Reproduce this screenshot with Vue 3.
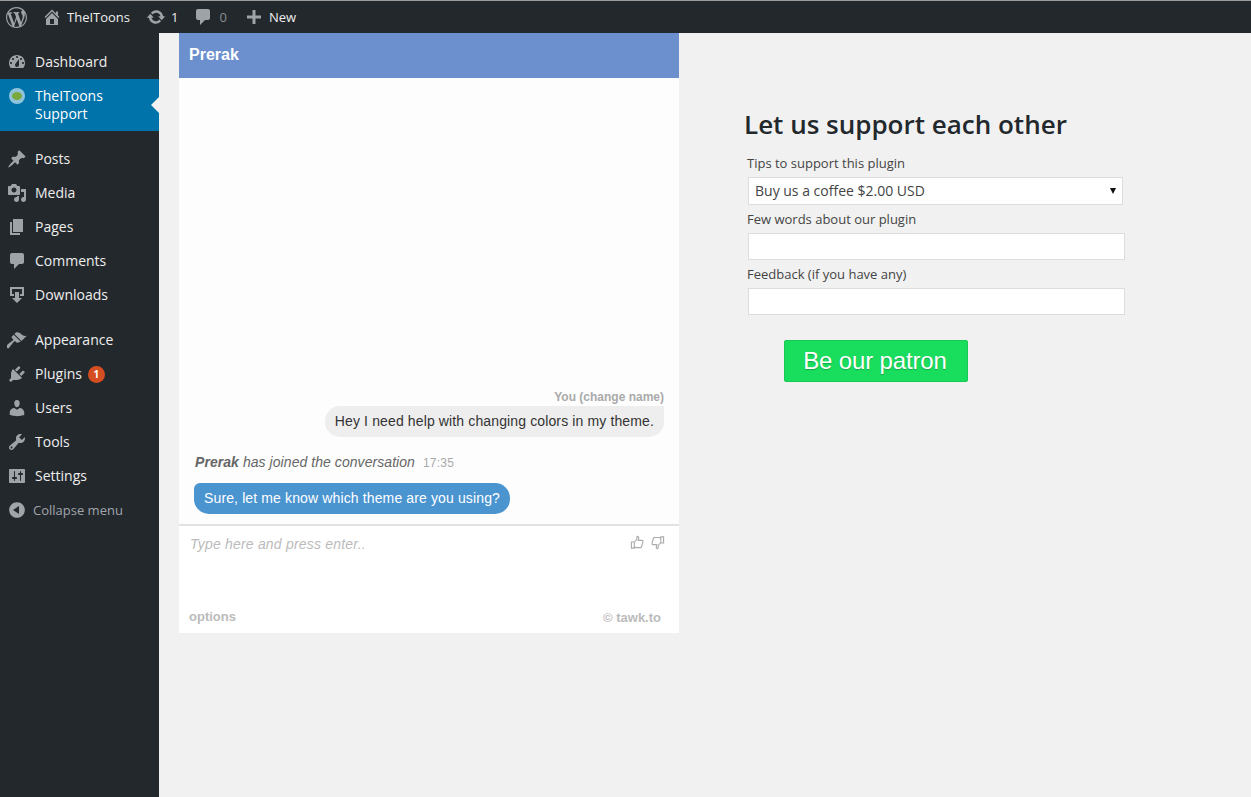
<template>
  <div class="page">
    <header class="topbar">
      <a class="bar-logo">
        <svg viewBox="0 0 20 20" class="wp"><path :d="icons.wordpress" /></svg>
      </a>
      <a class="bar-item site">
        <svg viewBox="0 0 20 20"><path :d="icons.home" /></svg>
        <span>TheIToons</span>
      </a>
      <a class="bar-item updates">
        <svg viewBox="0 0 20 20"><path :d="icons.update" /></svg>
        <span>1</span>
      </a>
      <a class="bar-item comments">
        <svg viewBox="0 0 20 20"><path :d="icons.comments" /></svg>
        <span>0</span>
      </a>
      <a class="bar-item add">
        <svg viewBox="0 0 20 20"><path :d="icons.plus" /></svg>
        <span>New</span>
      </a>
    </header>

    <div class="main">
      <nav class="sidebar">
        <ul v-for="(group, g) in menu" :key="g" class="menu-group">
          <li v-for="item in group" :key="item.label" :class="['menu-item', { active: item.active }]">
            <span v-if="item.active" class="plugin-icon"><i></i></span>
            <svg v-else viewBox="0 0 20 20"><path :d="icons[item.icon]" /></svg>
            <span class="menu-label">{{ item.label }}</span>
            <span v-if="item.badge" class="badge">{{ item.badge }}</span>
          </li>
        </ul>
        <div class="collapse">
          <svg viewBox="0 0 20 20"><path :d="icons.collapse" /></svg>
          <span>Collapse menu</span>
        </div>
      </nav>

      <section class="content">
        <div class="chat">
          <div class="chat-head">Prerak</div>
          <div class="chat-body">
            <div class="you">You (change name)</div>
            <div class="bubble mine">Hey I need help with changing colors in my theme.</div>
            <div class="joined">
              <em><b>Prerak</b> has joined the conversation</em>
              <span class="time">17:35</span>
            </div>
            <div class="bubble theirs">Sure, let me know which theme are you using?</div>
          </div>
          <div class="chat-foot">
            <div class="compose">
              <textarea class="chat-input" placeholder="Type here and press enter.."></textarea>
              <div class="rate">
                <svg viewBox="0 0 16 16"><path d="M1.500 7.500h3v6.500h-3zM4.500 8l2.600-3.200.5-3.300c1.400-.2 2 .9 1.600 2.600l-.4 1.600h3.900c1 0 1.400.8 1.100 1.600l-1.500 5.200c-.2.6-.6.9-1.200.9H6.500l-2-.9" /></svg>
                <svg viewBox="0 0 16 16"><path d="M14.500 8.500h-3V2h3zM11.500 8l-2.600 3.200-.5 3.300c-1.400.2-2-.9-1.600-2.600l.4-1.600H3.300c-1 0-1.400-.8-1.100-1.600l1.500-5.200C3.900 2.900 4.300 2.600 4.900 2.600h4.600l2 .9" /></svg>
              </div>
            </div>
            <div class="foot-links">
              <span>options</span>
              <span class="brand">© tawk.to</span>
            </div>
          </div>
        </div>

        <form class="support" @submit.prevent>
          <h2>Let us support each other</h2>
          <label>Tips to support this plugin</label>
          <div class="select-wrap">
            <select>
              <option>Buy us a coffee $2.00 USD</option>
            </select>
          </div>
          <label>Few words about our plugin</label>
          <input type="text" />
          <label>Feedback (if you have any)</label>
          <input type="text" />
          <button type="submit">Be our patron</button>
        </form>
      </section>
    </div>
  </div>
</template>

<script setup>
const icons = {
  wordpress:
    'M20 10c0-5.51-4.49-10-10-10C4.48 0 0 4.49 0 10c0 5.52 4.48 10 10 10 5.51 0 10-4.48 10-10zM7.780 15.370L4.370 6.220c.55-.02 1.170-.08 1.170-.08.5-.06.44-1.130-.06-1.110 0 0-1.450.11-2.370.11-.18 0-.37 0-.58-.01C4.120 2.690 6.870 1.110 10 1.110c2.330 0 4.450.87 6.050 2.340-.68-.11-1.650.39-1.650 1.580 0 .74.45 1.360.9 2.100.35.61.55 1.360.55 2.460 0 1.490-1.400 5-1.400 5l-3.030-8.370c.54-.02.82-.17.82-.17.5-.05.44-1.250-.06-1.220 0 0-1.440.12-2.380.12-.87 0-2.330-.12-2.330-.12-.5-.03-.56 1.200-.06 1.220l.92.08 1.260 3.410zM17.410 10c.24-.64.74-1.870.43-4.250.7 1.290 1.050 2.710 1.050 4.250 0 3.290-1.730 6.240-4.400 7.780.97-2.590 1.940-5.200 2.920-7.780zM6.100 18.090C3.120 16.650 1.110 13.530 1.110 10c0-1.300.23-2.480.72-3.590C3.250 10.300 4.670 14.200 6.100 18.090zm4.030-6.630l2.580 6.980c-.86.29-1.760.45-2.710.45-.79 0-1.570-.11-2.290-.33.81-2.380 1.620-4.740 2.420-7.100z',
  home: 'M16 8.500l1.530 1.530-1.060 1.060L10 4.620l-6.470 6.470-1.060-1.060L10 2.500l4 4v-2h2v4zm-6-2.460l6 5.990V18H4v-5.970zM12 17v-5H8v5h4z',
  update:
    'M10.200 3.280c3.530 0 6.430 2.610 6.920 6h2.080l-3.500 4-3.500-4h2.320c-.45-1.970-2.210-3.450-4.320-3.450-1.450 0-2.730.71-3.540 1.780L4.950 5.660C6.230 4.200 8.110 3.280 10.200 3.280zm-.4 13.440c-3.520 0-6.430-2.610-6.920-6H.8l3.500-4c1.170 1.330 2.330 2.670 3.500 4H5.480c.45 1.970 2.210 3.450 4.320 3.450 1.450 0 2.730-.71 3.540-1.780l1.710 1.950c-1.280 1.460-3.150 2.380-5.250 2.380z',
  comments:
    'M5 2h10c1.100 0 2 .9 2 2v7c0 1.100-.9 2-2 2h-3l-5 5v-5H5c-1.100 0-2-.9-2-2V4c0-1.100.9-2 2-2z',
  plus: 'M17 8.500v3h-5.500V17h-3v-5.500H3v-3h5.500V3h3v5.500z',
  dashboard:
    'M3.760 16h12.480c1.100-1.370 1.760-3.110 1.760-5 0-4.420-3.580-8-8-8s-8 3.580-8 8c0 1.890.66 3.630 1.760 5zM10 4c.55 0 1 .45 1 1s-.45 1-1 1-1-.45-1-1 .45-1 1-1zM6 6c.55 0 1 .45 1 1s-.45 1-1 1-1-.45-1-1 .45-1 1-1zm8 0c.55 0 1 .45 1 1s-.45 1-1 1-1-.45-1-1 .45-1 1-1zm-5.370 5.550L12 7v6c0 1.100-.9 2-2 2s-2-.9-2-2c0-.57.24-1.080.63-1.450zM4 10c.55 0 1 .45 1 1s-.45 1-1 1-1-.45-1-1 .45-1 1-1zm12 0c.55 0 1 .45 1 1s-.45 1-1 1-1-.45-1-1 .45-1 1-1z',
  post: 'M10.440 3.020l1.820-1.820 6.360 6.350-1.830 1.820c-1.050-.68-2.480-.57-3.410.36l-.75.75c-.92.93-1.040 2.350-.35 3.410l-1.830 1.820-2.410-2.410-2.800 2.790c-.42.42-3.380 2.710-3.800 2.290s1.860-3.390 2.280-3.810l2.790-2.790L4.100 9.360l1.830-1.820c1.050.69 2.480.57 3.400-.36l.75-.75c.93-.92 1.050-2.350.36-3.410z',
  media:
    'M13 11V4c0-.55-.45-1-1-1h-1.670L9 1H5L3.670 3H2c-.55 0-1 .45-1 1v7c0 .55.45 1 1 1h10c.55 0 1-.45 1-1zM7 4.500c1.380 0 2.500 1.120 2.500 2.500S8.380 9.500 7 9.500 4.500 8.380 4.500 7 5.620 4.500 7 4.500zM14 6h5v10.500c0 1.380-1.120 2.500-2.500 2.500S14 17.880 14 16.500s1.120-2.500 2.500-2.500c.17 0 .34.02.5.05V9h-3V6zm-4 8.050V13h2v3.500c0 1.380-1.120 2.500-2.500 2.500S7 17.880 7 16.500 8.120 14 9.500 14c.17 0 .34.02.5.05z',
  page: 'M6 15V2h10v13H6zm-1 1h8v2H3V5h2v11z',
  download: 'M3 2h14v9h-4V9h2V4H5v5h2v2H3zM8 7h4v6h3l-5 5-5-5h3z',
  appearance:
    'M14.480 11.060L7.410 3.990l1.500-1.500c.5-.56 2.300-.47 3.510.32 1.210.8 1.430 1.280 2.910 2.100 1.180.64 2.450 1.260 4.450.85zm-.71.71L6.700 4.700 4.930 6.470c-.39.39-.39 1.020 0 1.410l1.060 1.060c.39.39.39 1.030 0 1.420-.6.6-6.480 5.060-6.480 5.060-.81.65-.3 1.700.26 2.260.56.56 1.610 1.070 2.260.26 0 0 4.460-5.880 5.060-6.480.39-.39 1.030-.39 1.420 0l1.060 1.060c.39.39 1.020.39 1.410 0z',
  plugin:
    'M13.110 4.360L9.870 7.600 8 5.730l3.240-3.240c.35-.34 1.050-.2 1.560.32.52.51.66 1.210.31 1.550zm-8 1.770l.91-1.120 9.010 9.010-1.190.84c-.71.71-2.630 1.160-3.820 1.160H6.140L4.900 17.260c-.59.59-1.540.59-2.120 0-.59-.58-.59-1.530 0-2.120l1.240-1.240v-3.880c0-1.130.4-3.190 1.090-3.890zm7.260 3.970l3.240-3.240c.34-.35 1.040-.21 1.550.31.52.51.66 1.210.31 1.550l-3.240 3.250z',
  users:
    'M10 9.250c-2.270 0-2.730-3.440-2.730-3.440C7 4.020 7.820 2 9.970 2c2.160 0 2.980 2.020 2.710 3.810 0 0-.41 3.440-2.680 3.440zm0 2.570L12.720 10c2.390 0 4.520 2.330 4.520 4.530v2.490s-3.650 1.130-7.240 1.130c-3.650 0-7.240-1.130-7.240-1.130v-2.490c0-2.250 1.940-4.480 4.470-4.480z',
  tools:
    'M16.680 9.770c-1.340 1.340-3.300 1.670-4.950.99l-5.410 6.520c-.99.99-2.590.99-3.580 0s-.99-2.590 0-3.570l6.520-5.420c-.68-1.650-.35-3.610.99-4.950 1.280-1.280 3.120-1.620 4.720-1.060l-2.890 2.890 2.820 2.820 2.860-2.870c.53 1.580.18 3.390-1.080 4.650zM3.810 16.210c.4.39 1.040.39 1.430 0 .4-.4.4-1.040 0-1.430-.39-.4-1.030-.4-1.430 0-.39.39-.39 1.030 0 1.430z',
  settings:
    'M18 16V4c0-.55-.45-1-1-1H3c-.55 0-1 .45-1 1v12c0 .55.45 1 1 1h14c.55 0 1-.45 1-1zM8 11h1c.55 0 1 .45 1 1s-.45 1-1 1H8v1.500c0 .28-.22.5-.5.5s-.5-.22-.5-.5V13H6c-.55 0-1-.45-1-1s.45-1 1-1h1V5.500c0-.28.22-.5.5-.5s.5.22.5.5V11zm5-2h-1c-.55 0-1-.45-1-1s.45-1 1-1h1V5.500c0-.28.22-.5.5-.5s.5.22.5.5V7h1c.55 0 1 .45 1 1s-.45 1-1 1h-1v5.500c0 .28-.22.5-.5.5s-.5-.22-.5-.5V9z',
  collapse:
    'M10 2.160c4.330 0 7.840 3.510 7.840 7.840s-3.510 7.840-7.840 7.840S2.160 14.330 2.160 10 5.710 2.160 10 2.160zm2 11.840V6l-6 4z',
}

const menu = [
  [{ label: 'Dashboard', icon: 'dashboard' }, { label: 'TheIToons Support', active: true }],
  [
    { label: 'Posts', icon: 'post' },
    { label: 'Media', icon: 'media' },
    { label: 'Pages', icon: 'page' },
    { label: 'Comments', icon: 'comments' },
    { label: 'Downloads', icon: 'download' },
  ],
  [
    { label: 'Appearance', icon: 'appearance' },
    { label: 'Plugins', icon: 'plugin', badge: 1 },
    { label: 'Users', icon: 'users' },
    { label: 'Tools', icon: 'tools' },
    { label: 'Settings', icon: 'settings' },
  ],
]
</script>

<style>
html,
body {
  margin: 0;
  background: #f1f1f1;
}
</style>

<style scoped>
.page {
  height: 797px;
  display: flex;
  flex-direction: column;
  overflow: hidden;
  font-family: 'Open Sans', 'Liberation Sans', sans-serif;
  background: #f1f1f1;
}

/* top bar */
.topbar {
  height: 32px;
  flex: none;
  display: flex;
  align-items: center;
  background: #23282d;
  border-top: 1px solid #9c9c9c;
  color: #eee;
  font-size: 13px;
}
.bar-logo {
  width: 20px;
  height: 20px;
  margin-left: 6px;
  margin-right: 16px;
}
.wp {
  display: block;
  width: 21px;
  height: 21px;
  fill: #9ea3a8;
}
.bar-item {
  display: flex;
  align-items: center;
}
.bar-item svg {
  width: 20px;
  height: 20px;
  fill: #9ea3a8;
  margin-right: 5px;
}
.site {
  margin-right: 16px;
}
.updates {
  margin-right: 15px;
}
.comments {
  margin-right: 17px;
  color: #888d92;
}
.bar-item.comments svg {
  margin-right: 6px;
}

/* sidebar */
.main {
  flex: 1;
  display: flex;
  min-height: 0;
}
.sidebar {
  width: 159px;
  flex: none;
  background: #23282d;
  padding-top: 12px;
}
.menu-group {
  list-style: none;
  margin: 0 0 11px;
  padding: 0;
}
.menu-item {
  position: relative;
  height: 34px;
  display: flex;
  align-items: center;
  color: #eee;
  font-size: 14px;
  line-height: 18px;
}
.menu-item svg {
  width: 20px;
  height: 20px;
  fill: #9ea3a8;
  margin: 0 8px 0 7px;
  flex: none;
}
.menu-item.active {
  height: 52px;
  background: #0073aa;
  color: #fff;
  align-items: flex-start;
  padding-top: 8px;
  box-sizing: border-box;
}
.menu-item.active::after {
  content: '';
  position: absolute;
  right: 0;
  top: 18px;
  border: 8px solid transparent;
  border-right-color: #f1f1f1;
  border-left-width: 0;
}
.menu-label {
  width: 90px;
}
.active .menu-label {
  width: 100px;
}
.plugin-icon {
  width: 16px;
  height: 16px;
  margin: 1px 10px 0 9px;
  flex: none;
  border-radius: 50%;
  background: #8fc4da;
  display: flex;
  align-items: center;
  justify-content: center;
}
.plugin-icon i {
  width: 10px;
  height: 8px;
  border-radius: 50%;
  background: #7aa83c;
}
.menu-label:has(+ .badge) {
  width: auto;
}
.badge {
  width: 17px;
  height: 17px;
  margin-left: 6px;
  border-radius: 50%;
  background: #d54e21;
  color: #fff;
  font-size: 10px;
  font-weight: 700;
  line-height: 17px;
  text-align: center;
}
.collapse {
  height: 34px;
  margin-top: -11px;
  display: flex;
  align-items: center;
  color: #a0a5aa;
  font-size: 13px;
}
.collapse svg {
  width: 20px;
  height: 20px;
  fill: #a0a5aa;
  margin: 0 6px 0 7px;
}

/* chat */
.content {
  flex: 1;
  display: flex;
  align-items: flex-start;
  padding-left: 20px;
}
.chat {
  width: 500px;
  flex: none;
  font-family: 'Liberation Sans', Arial, sans-serif;
  background: #fff;
}
.chat-head {
  height: 45px;
  padding-left: 10px;
  background: #6c8fcd;
  color: #fff;
  font-size: 16px;
  font-weight: 700;
  line-height: 44px;
}
.chat-body {
  height: 448px;
  box-sizing: border-box;
  padding: 0 15px 10px;
  display: flex;
  flex-direction: column;
  justify-content: flex-end;
  background: #fdfdfd;
  border-bottom: 2px solid #e2e2e2;
}
.you {
  align-self: flex-end;
  color: #aaa;
  font-size: 12px;
  font-weight: 700;
  line-height: 16px;
  margin-bottom: 1px;
}
.bubble {
  height: 31px;
  padding: 0 10px;
  font-size: 14px;
  line-height: 31px;
  border-radius: 15px;
  letter-spacing: 0.13px;
}
.mine {
  align-self: flex-end;
  background: #eee;
  color: #333;
  border-top-right-radius: 0;
}
.joined {
  margin: 16px 0 11px;
  padding-left: 1px;
  color: #666;
  font-size: 14px;
  line-height: 18px;
  letter-spacing: 0.06px;
}
.time {
  margin-left: 8px;
  color: #aaa;
  font-size: 12px;
  letter-spacing: 0.2px;
}
.theirs {
  align-self: flex-start;
  background: #4a94d0;
  color: #fff;
  border-top-left-radius: 6px;
}
.chat-foot {
  height: 107px;
  display: flex;
  flex-direction: column;
  justify-content: space-between;
}
.compose {
  display: flex;
  justify-content: space-between;
  padding: 9px 14px 0 11px;
}
.chat-input {
  flex: 1;
  height: 40px;
  padding: 0;
  border: 0;
  outline: 0;
  resize: none;
  background: transparent;
  font: italic 14px/18px 'Liberation Sans', Arial, sans-serif;
  letter-spacing: 0.2px;
}
.chat-input::placeholder {
  color: #bbb;
  opacity: 1;
}
.rate {
  display: flex;
  gap: 5px;
}
.rate svg {
  width: 15px;
  height: 15px;
  fill: none;
  stroke: #aaa;
  stroke-width: 1.2;
}
.foot-links {
  display: flex;
  justify-content: space-between;
  padding: 0 18px 8px 10px;
  color: #bbb;
  font-size: 13px;
  font-weight: 700;
  line-height: 16px;
}
.brand {
  position: relative;
  top: 1px;
}

/* support form */
.support {
  width: 381px;
  margin-left: 65px;
  padding-top: 74px;
  display: flex;
  flex-direction: column;
  align-items: flex-start;
}
h2 {
  margin: 0 0 12px;
  color: #23282d;
  font-size: 26px;
  font-weight: 600;
  line-height: 35px;
}
label {
  margin-left: 3px;
  color: #444;
  font-size: 13px;
  line-height: 18px;
}
.select-wrap {
  position: relative;
  width: 375px;
  height: 28px;
  margin: 5px 0 5px 4px;
}
.select-wrap::after {
  content: '';
  position: absolute;
  right: 7px;
  top: 11px;
  border: 3px solid transparent;
  border-top: 6px solid #111;
  border-bottom: 0;
}
select {
  width: 100%;
  height: 100%;
  padding: 0 6px 2px;
  appearance: none;
  border: 1px solid #ddd;
  border-radius: 0;
  background: #fff;
  color: #444;
  font: 14px 'Open Sans', sans-serif;
}
input {
  width: 377px;
  height: 27px;
  box-sizing: border-box;
  margin: 5px 0 5px 4px;
  border: 1px solid #ddd;
  background: #fff;
}
button {
  width: 184px;
  height: 42px;
  margin: 20px 0 0 40px;
  padding: 0 8px 0 6px;
  border: 1px solid #18c955;
  border-radius: 2px;
  background: #19dd5d;
  color: #fff;
  font: 24px 'Liberation Sans', Arial, sans-serif;
  letter-spacing: -0.15px;
  text-shadow: 0 1px 1px rgba(0, 0, 0, 0.25);
}
</style>
